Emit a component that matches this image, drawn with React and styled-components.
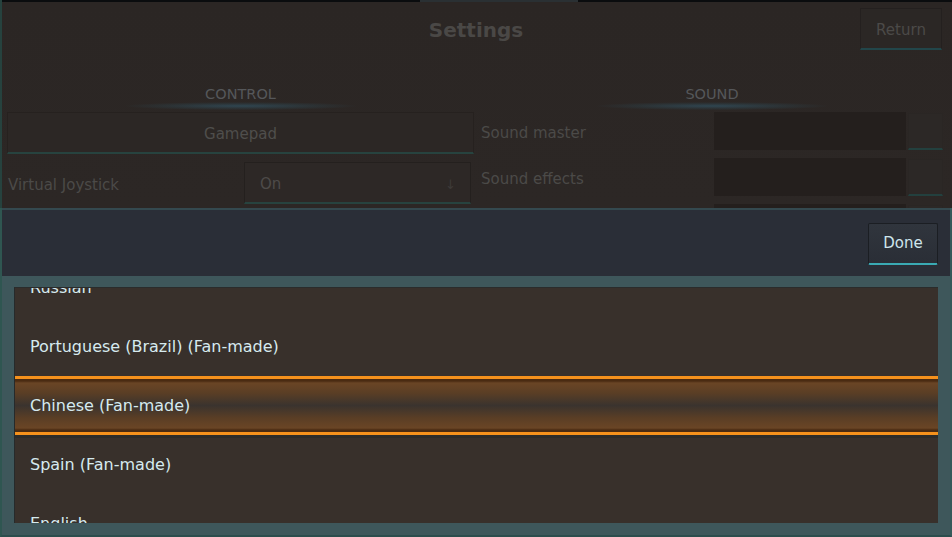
import React, { useLayoutEffect, useRef } from "react";
import styled, { createGlobalStyle } from "styled-components";

const Global = createGlobalStyle`
  html, body { margin: 0; padding: 0; background: #2b2624; }
  body { font-family: "DejaVu Sans", "Liberation Sans", sans-serif; }
  * { box-sizing: border-box; }
`;

const Screen = styled.div`
  width: 952px;
  height: 537px;
  display: flex;
  flex-direction: column;
  overflow: hidden;
  background: #2b2624;
`;

/* ---------- dimmed settings screen ---------- */
const Settings = styled.div`
  height: 208px;
  flex: none;
  display: flex;
  flex-direction: column;
  overflow: hidden;
  border-left: 2px solid #26423e;
  background: linear-gradient(to bottom, #2b2624, #2c2725);
`;

const TopEdge = styled.div`
  height: 2px;
  flex: none;
  background: linear-gradient(
    to right,
    #0a0c0e 0,
    #0a0c0e 418px,
    #2a3033 418px,
    #2a3033 576px,
    #0a0c0e 576px
  );
`;

const TopBar = styled.div`
  height: 56px;
  flex: none;
  display: grid;
  grid-template-columns: 1fr auto 1fr;
  align-items: start;
`;

const Title = styled.h1`
  grid-column: 2;
  margin: 0 2px 0 0;
  padding-top: 16px;
  font-size: 20px;
  line-height: 24px;
  font-weight: bold;
  color: #4a4846;
`;

const ReturnButton = styled.div`
  grid-column: 3;
  justify-self: end;
  margin: 6px 10px 0 0;
  width: 82px;
  height: 42px;
  display: flex;
  align-items: center;
  justify-content: center;
  padding-top: 3px;
  border: 1px solid #24201f;
  border-bottom: 2px solid #22464a;
  background: #2b2725;
  color: #4b4a48;
  font-size: 15px;
`;

const Columns = styled.div`
  display: grid;
  grid-template-columns: 467px 462px;
  column-gap: 7px;
  padding-left: 5px;
`;

const Column = styled.div`
  display: flex;
  flex-direction: column;
`;

const SectionHead = styled.div`
  height: 54px;
  display: flex;
  flex-direction: column;
  align-items: center;
  padding-top: 28px;
`;

const SectionTitle = styled.div`
  font-size: 14.5px;
  line-height: 17px;
  color: #55575a;
`;

const Glow = styled.div`
  width: 230px;
  height: 8px;
  margin-top: -1px;
  background: radial-gradient(
    ellipse at center,
    rgba(50, 90, 110, 0.6) 0%,
    rgba(45, 78, 92, 0.28) 45%,
    rgba(43, 38, 36, 0) 72%
  );
`;

const WideButton = styled.div`
  height: 42px;
  display: flex;
  align-items: center;
  justify-content: center;
  padding-top: 3px;
  border: 1px solid #26211f;
  border-bottom: 2px solid #27433f;
  background: #2c2725;
  color: #4f4e4c;
  font-size: 15px;
`;

const OptionRow = styled.div`
  height: 42px;
  margin-top: 8px;
  display: flex;
  align-items: center;
  justify-content: space-between;
`;

const DimLabel = styled.div`
  font-size: 15px;
  color: #4b4a48;
  padding-top: 3px;
  padding-left: ${(p) => p.$indent || 0}px;
`;

const Dropdown = styled.div`
  width: 227px;
  height: 42px;
  margin-right: 3px;
  display: flex;
  align-items: center;
  justify-content: space-between;
  padding: 3px 14px 0 15px;
  border: 1px solid #24201e;
  border-bottom: 2px solid #27433f;
  background: #2d2826;
  color: #4d4b49;
  font-size: 15px;
`;

const Arrow = styled.span`
  color: #3d3a38;
  font-size: 13px;
`;

const SliderRow = styled.div`
  height: 38px;
  margin-bottom: 8px;
  display: flex;
  align-items: center;
`;

const SliderLabel = styled.div`
  width: 233px;
  padding-top: 3px;
  font-size: 15px;
  color: #4b4a48;
`;

const SliderTrack = styled.div`
  width: 192px;
  height: 38px;
  background: #241f1d;
`;

const SliderKnob = styled.div`
  width: 35px;
  height: 37px;
  margin-left: 2px;
  border: 1px solid #2a2624;
  border-bottom: 2px solid #23403e;
  background: #2c2826;
`;

/* ---------- language picker overlay ---------- */
const Overlay = styled.div`
  flex: 1;
  min-height: 0;
  display: flex;
  flex-direction: column;
  border-left: 2px solid #2f5651;
  border-right: 2px solid #355a5a;
  border-bottom: 2px solid #2c4d4d;
`;

const PickerBar = styled.div`
  height: 68px;
  flex: none;
  display: flex;
  align-items: center;
  justify-content: flex-end;
  padding-right: 12px;
  border-top: 2px solid #34494f;
  background: #2a2e37;
`;

const DoneButton = styled.button`
  width: 70px;
  height: 42px;
  margin-top: 1px;
  padding: 0;
  border: 1px solid #1b1e23;
  border-bottom: 2px solid #3aaab4;
  border-radius: 2px;
  background: linear-gradient(to bottom, #30353d, #2a2e36);
  color: #cfe5ec;
  font-family: "DejaVu Sans", "Liberation Sans", sans-serif;
  font-size: 15px;
`;

const Frame = styled.div`
  flex: 1;
  min-height: 0;
  display: flex;
  padding: 11px 12px 12px 12px;
  background: #3e575b;
`;

const List = styled.div`
  flex: 1;
  min-height: 0;
  overflow: hidden;
  border-top: 1px solid #2a2c2c;
  border-left: 1px solid #262a2b;
  background: #38302b;
`;

const Item = styled.div`
  height: 59px;
  display: flex;
  align-items: center;
  padding-left: 15px;
  color: #d6eaef;
  font-size: 16px;
  ${(p) =>
    p.$selected &&
    `
    border-top: 3px solid #f5911c;
    border-bottom: 3px solid #f5911c;
    box-shadow: 0 3px 0 #2c2b29;
    position: relative;
    background: linear-gradient(
      to bottom,
      #4a2b12 0,
      #4a2b12 2px,
      #6a4525 4px,
      #5a3e25 14px,
      #3a332e 50%,
      #5a3e25 calc(100% - 14px),
      #6a4525 calc(100% - 4px),
      #4a2b12 calc(100% - 2px),
      #4a2b12 100%
    );
  `}
`;

const languages = [
  "Russian",
  "Portuguese (Brazil) (Fan-made)",
  "Chinese (Fan-made)",
  "Spain (Fan-made)",
  "English",
];

export default function App() {
  const listRef = useRef(null);
  useLayoutEffect(() => {
    if (listRef.current) listRef.current.scrollTop = 30;
  }, []);

  return (
    <>
      <Global />
      <Screen>
        <Settings>
          <TopEdge />
          <TopBar>
            <Title>Settings</Title>
            <ReturnButton>Return</ReturnButton>
          </TopBar>
          <Columns>
            <Column>
              <SectionHead>
                <SectionTitle>CONTROL</SectionTitle>
                <Glow />
              </SectionHead>
              <WideButton>Gamepad</WideButton>
              <OptionRow>
                <DimLabel $indent={1}>Virtual Joystick</DimLabel>
                <Dropdown>
                  <span>On</span>
                  <Arrow>↓</Arrow>
                </Dropdown>
              </OptionRow>
            </Column>
            <Column>
              <SectionHead>
                <SectionTitle>SOUND</SectionTitle>
                <Glow />
              </SectionHead>
              <SliderRow>
                <SliderLabel>Sound master</SliderLabel>
                <SliderTrack />
                <SliderKnob />
              </SliderRow>
              <SliderRow>
                <SliderLabel>Sound effects</SliderLabel>
                <SliderTrack />
                <SliderKnob />
              </SliderRow>
              <SliderRow>
                <SliderLabel>Music</SliderLabel>
                <SliderTrack />
                <SliderKnob />
              </SliderRow>
            </Column>
          </Columns>
        </Settings>
        <Overlay>
          <PickerBar>
            <DoneButton>Done</DoneButton>
          </PickerBar>
          <Frame>
            <List ref={listRef}>
              {languages.map((l) => (
                <Item key={l} $selected={l === "Chinese (Fan-made)"}>
                  {l}
                </Item>
              ))}
            </List>
          </Frame>
        </Overlay>
      </Screen>
    </>
  );
}
